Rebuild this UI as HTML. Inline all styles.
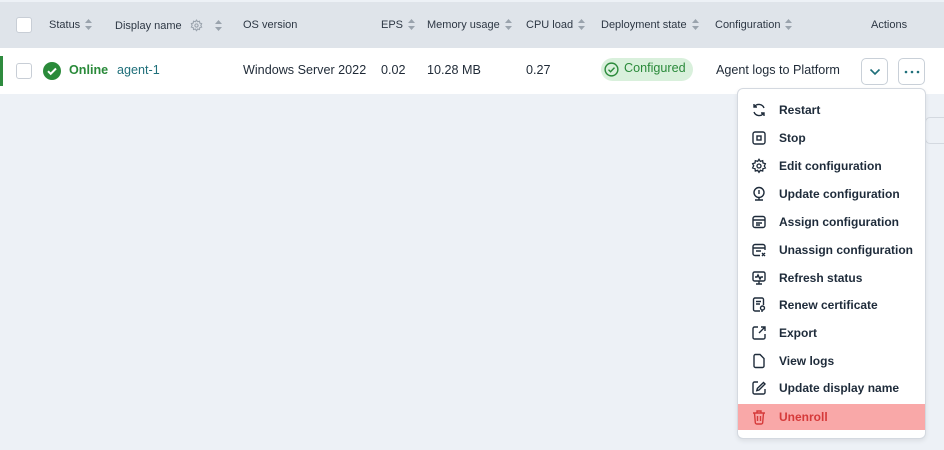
<!DOCTYPE html>
<html><head><meta charset="utf-8"><style>
*{box-sizing:border-box;margin:0;padding:0}
body{width:944px;height:450px;overflow:hidden;background:#edf1f6;font-family:"Liberation Sans",sans-serif;position:relative;color:#1f2a37}
.hdr{position:absolute;left:0;top:2px;width:944px;height:46px;background:#dfe4ea;font-size:11px;color:#2d3744}
.hdr span{position:absolute;top:17px;white-space:nowrap}
.sort{display:inline-block;width:7px;height:11px;vertical-align:-2px;margin-left:5px}
.row{position:absolute;left:0;top:48px;width:944px;height:46px;background:#fff;font-size:12.6px}
.row span{position:absolute;top:15px;white-space:nowrap}
.cb{position:absolute;left:16px;width:16px;height:16px;border:1px solid #c8ced6;border-radius:3px;background:#fff}
.menu{position:absolute;left:737px;top:88px;width:189px;height:351px;background:#fff;border:1px solid #d4d9e0;border-radius:6px;box-shadow:0 2px 5px rgba(0,0,0,.08);font-size:12px;font-weight:bold;color:#1e2b3a}
.it{position:absolute;left:0;width:187px;height:26px}
.it svg{position:absolute;left:13px;top:5px}
.it b{position:absolute;left:41px;top:6px;white-space:nowrap}
.btn{position:absolute;top:58px;width:27px;height:27px;border:1px solid #c9d0d8;border-radius:5px;background:#fff}
</style></head><body>
<div class="hdr">
<div class="cb" style="top:15px"></div>
<span style="left:49px">Status<svg class="sort" viewBox="0 0 7 11"><path d="M3.5 0L7 4H0z M3.5 11L0 7h7z" fill="#9aa3ad"/></svg></span>
<span style="left:115px">Display name <svg width="13" height="13" viewBox="0 0 24 24" style="vertical-align:-3px;margin-left:5px" fill="none" stroke="#9aa3ad" stroke-width="2"><circle cx="12" cy="12" r="3"/><path d="M12 2l2 3 3.5-1 .5 3.5 3.5 1-1.5 3.5 1.5 3-3.5 1-.5 3.5-3.5-1-2 3-2-3-3.5 1-.5-3.5-3.5-1 1.5-3.5L2.5 8.5 6 7.5 6.5 4 10 5z"/></svg><svg class="sort" style="margin-left:12px" viewBox="0 0 7 11"><path d="M3.5 0L7 4H0z M3.5 11L0 7h7z" fill="#9aa3ad"/></svg></span>
<span style="left:243px">OS version</span>
<span style="left:381px">EPS<svg class="sort" viewBox="0 0 7 11"><path d="M3.5 0L7 4H0z M3.5 11L0 7h7z" fill="#9aa3ad"/></svg></span>
<span style="left:427px">Memory usage<svg class="sort" viewBox="0 0 7 11"><path d="M3.5 0L7 4H0z M3.5 11L0 7h7z" fill="#9aa3ad"/></svg></span>
<span style="left:526px">CPU load<svg class="sort" viewBox="0 0 7 11"><path d="M3.5 0L7 4H0z M3.5 11L0 7h7z" fill="#9aa3ad"/></svg></span>
<span style="left:601px">Deployment state<svg class="sort" viewBox="0 0 7 11"><path d="M3.5 0L7 4H0z M3.5 11L0 7h7z" fill="#9aa3ad"/></svg></span>
<span style="left:715px">Configuration<svg class="sort" viewBox="0 0 7 11"><path d="M3.5 0L7 4H0z M3.5 11L0 7h7z" fill="#9aa3ad"/></svg></span>
<span style="left:871px">Actions</span>
</div>
<div class="row">
<div style="position:absolute;left:0;top:8px;width:3px;height:30px;background:#2e8b3e"></div>
<div class="cb" style="top:15px"></div>
<svg style="position:absolute;left:43px;top:14px" width="18" height="18" viewBox="0 0 18 18"><circle cx="9" cy="9" r="9" fill="#2a8a3a"/><path d="M5 9.2l2.7 2.6L13 6.5" stroke="#fff" stroke-width="2" fill="none"/></svg>
<span style="left:69px;color:#2a8a3a;font-weight:bold">Online</span>
<span style="left:117px;color:#1f6f7a">agent-1</span>
<span style="left:243px">Windows Server 2022</span>
<span style="left:381px">0.02</span>
<span style="left:427px">10.28 MB</span>
<span style="left:526px">0.27</span>
<div style="position:absolute;left:601px;top:10px;width:92px;height:23px;border-radius:12px;background:#d9f0dc"></div>
<svg style="position:absolute;left:604px;top:14px" width="15" height="15" viewBox="0 0 16 16" fill="none" stroke="#2a8a3a" stroke-width="1.5"><circle cx="8" cy="8" r="6.8"/><path d="M4.8 8.2l2.2 2.2 4.2-4.4"/></svg>
<span style="left:624px;top:13px;color:#2a8a3a">Configured</span>
<span style="left:716px">Agent logs to Platform</span>
</div>
<div class="btn" style="left:861px"><svg style="position:absolute;left:7px;top:9px" width="12" height="8" viewBox="0 0 12 8"><path d="M1.5 1.5L6 6l4.5-4.5" stroke="#1f6f7a" stroke-width="1.6" fill="none"/></svg></div>
<div class="btn" style="left:898px"><svg style="position:absolute;left:5px;top:11px" width="16" height="4"><circle cx="2" cy="2" r="1.3" fill="#1f6f7a"/><circle cx="8" cy="2" r="1.3" fill="#1f6f7a"/><circle cx="14" cy="2" r="1.3" fill="#1f6f7a"/></svg></div>
<div style="position:absolute;left:925px;top:117px;width:30px;height:27px;border:1px solid #d4d9e0;border-radius:5px;background:#edf1f6"></div>
<div class="menu">
<div class="it" style="top:8px"><svg width="16" height="16" viewBox="0 0 16 16" fill="none" stroke="#1e2b3a" stroke-width="1.4"><path d="M13 6A5.5 5.5 0 0 0 3.2 5M3 10a5.5 5.5 0 0 0 9.8 1M3 2v3h3M13 14v-3h-3"/></svg><b>Restart</b></div>
<div class="it" style="top:36px"><svg width="16" height="16" viewBox="0 0 16 16" fill="none" stroke="#1e2b3a" stroke-width="1.4"><rect x="2" y="2" width="12" height="12" rx="2"/><rect x="6" y="6" width="4" height="4"/></svg><b>Stop</b></div>
<div class="it" style="top:64px"><svg width="16" height="16" viewBox="0 0 24 24" fill="none" stroke="#1e2b3a" stroke-width="2"><circle cx="12" cy="12" r="3"/><path d="M12 2l2 3 3.5-1 .5 3.5 3.5 1-1.5 3.5 1.5 3-3.5 1-.5 3.5-3.5-1-2 3-2-3-3.5 1-.5-3.5-3.5-1 1.5-3.5L2.5 8.5 6 7.5 6.5 4 10 5z"/></svg><b>Edit configuration</b></div>
<div class="it" style="top:92px"><svg width="16" height="16" viewBox="0 0 16 16" fill="none" stroke="#1e2b3a" stroke-width="1.4"><circle cx="8" cy="6.5" r="5"/><path d="M8 4v4M4 14h8M8 11.5V14"/></svg><b>Update configuration</b></div>
<div class="it" style="top:120px"><svg width="16" height="16" viewBox="0 0 16 16" fill="none" stroke="#1e2b3a" stroke-width="1.4"><rect x="2" y="2.5" width="12" height="11" rx="2"/><path d="M2 6h12M5 9h6M5 11h4"/></svg><b>Assign configuration</b></div>
<div class="it" style="top:148px"><svg width="16" height="16" viewBox="0 0 16 16" fill="none" stroke="#1e2b3a" stroke-width="1.4"><path d="M14 8V4.5a2 2 0 0 0-2-2H4a2 2 0 0 0-2 2v7a2 2 0 0 0 2 2h5M2 6h12M5 9h5M11 11l3 3M14 11l-3 3"/></svg><b>Unassign configuration</b></div>
<div class="it" style="top:176px"><svg width="16" height="16" viewBox="0 0 16 16" fill="none" stroke="#1e2b3a" stroke-width="1.4"><rect x="2" y="2" width="12" height="9" rx="1.5"/><path d="M4 7h2l1-2 2 4 1-2h2M8 11v3M5 14h6"/></svg><b>Refresh status</b></div>
<div class="it" style="top:203px"><svg width="16" height="16" viewBox="0 0 16 16" fill="none" stroke="#1e2b3a" stroke-width="1.4"><path d="M9 14H4a1.5 1.5 0 0 1-1.5-1.5v-10A1.5 1.5 0 0 1 4 1h7a1.5 1.5 0 0 1 1.5 1.5V8M5 4.5h5M5 7h4"/><circle cx="11.5" cy="11" r="2"/><path d="M11 13v2"/></svg><b>Renew certificate</b></div>
<div class="it" style="top:231px"><svg width="16" height="16" viewBox="0 0 16 16" fill="none" stroke="#1e2b3a" stroke-width="1.4"><path d="M7 2H3.5A1.5 1.5 0 0 0 2 3.5v9A1.5 1.5 0 0 0 3.5 14h9a1.5 1.5 0 0 0 1.5-1.5V9M10 2h4v4M14 2L8 8"/></svg><b>Export</b></div>
<div class="it" style="top:259px"><svg width="16" height="16" viewBox="0 0 16 16" fill="none" stroke="#1e2b3a" stroke-width="1.4"><path d="M9 1.5H4.5A1.5 1.5 0 0 0 3 3v10a1.5 1.5 0 0 0 1.5 1.5h7A1.5 1.5 0 0 0 13 13V5.5z"/></svg><b>View logs</b></div>
<div class="it" style="top:286px"><svg width="16" height="16" viewBox="0 0 16 16" fill="none" stroke="#1e2b3a" stroke-width="1.4"><path d="M7 2H3.5A1.5 1.5 0 0 0 2 3.5v9A1.5 1.5 0 0 0 3.5 14h9a1.5 1.5 0 0 0 1.5-1.5V9M12.5 2.5l1.5 1.5-6 6-2.2.6.6-2.2z"/></svg><b>Update display name</b></div>
<div class="it" style="top:315px;background:#f9a8a8"><svg width="16" height="16" viewBox="0 0 16 16" fill="none" stroke="#d63a3a" stroke-width="1.4"><path d="M2 4h12M6 4V2h4v2M3.5 4l.8 9.5A1.5 1.5 0 0 0 5.8 15h4.4a1.5 1.5 0 0 0 1.5-1.5L12.5 4M6.5 7v5M9.5 7v5"/></svg><b style="color:#d63a3a">Unenroll</b></div>
</div>
</body></html>
